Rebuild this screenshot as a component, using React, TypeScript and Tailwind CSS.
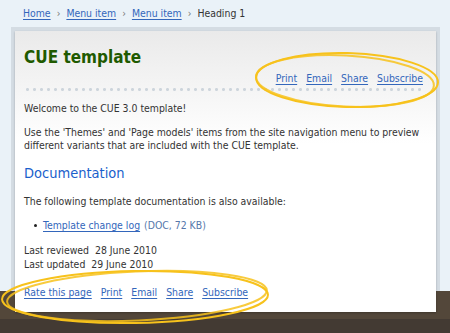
import React from 'react';

const font = "font-['DejaVu_Sans_Condensed','DejaVu_Sans',sans-serif]";

function Ellipses() {
  return (
    <svg
      className="absolute inset-0 pointer-events-none z-20"
      width="450"
      height="333"
      viewBox="0 0 450 333"
      fill="none"
    >
      <g stroke="#f7c21c" strokeWidth="2" strokeLinecap="round">
        <ellipse cx="347" cy="80" rx="91" ry="27" transform="rotate(1.5 347 80)" />
        <ellipse cx="345" cy="81" rx="89" ry="25.5" transform="rotate(3 345 81)" opacity="0.85" />
        <ellipse cx="135" cy="297" rx="133" ry="26" transform="rotate(-1 135 297)" />
        <ellipse cx="137" cy="296" rx="130" ry="24.5" transform="rotate(-2.5 137 296)" opacity="0.85" />
      </g>
    </svg>
  );
}

function Sep() {
  return <span className="mx-[6px] text-[#777]">›</span>;
}

export default function App() {
  const linkCls = 'text-[#3366bb] underline underline-offset-2';
  const actions = ['Print', 'Email', 'Share', 'Subscribe'];

  return (
    <div className={`relative w-[450px] h-[333px] overflow-hidden bg-[#eaf2f8] text-[#333] ${font}`}>
      {/* breadcrumb */}
      <nav className="h-[27px] flex items-center pl-[23px] text-[10.4px] leading-[13px]">
        <a className={linkCls}>Home</a>
        <Sep />
        <a className={linkCls}>Menu item</a>
        <Sep />
        <a className={linkCls}>Menu item</a>
        <Sep />
        <span>Heading 1</span>
      </nav>

      {/* frame */}
      <div className="ml-[11px] mr-[10px] bg-[#d4dce3] px-[4px] pt-[4px]">
        <div className="relative z-10 -mb-[21px] bg-linear-to-b from-[#eaeaea] via-white via-40% to-white pl-[9px] pr-[13px] pt-[15px] pb-[13px] text-[10.4px] leading-[13px] shadow-[0_1px_2px_rgba(0,0,0,0.25)]">
          <h1 className="text-[17px] leading-[23px] font-bold text-[#1f5a00]">CUE template</h1>

          <div className="mt-[3px] flex justify-end gap-[9px]">
            {actions.map((a) => (
              <a key={a} className={linkCls}>{a}</a>
            ))}
          </div>

          <div className="mt-[3px] h-[3px] bg-[radial-gradient(circle,#cdd5dc_1.3px,transparent_1.6px)] bg-[length:7px_3px] bg-repeat-x" />

          <p className="mt-[11px]">Welcome to the CUE 3.0 template!</p>
          <p className="mt-[11px]">
            Use the 'Themes' and 'Page models' items from the site navigation menu to preview
            different variants that are included with the CUE template.
          </p>

          <h2 className="mt-[13px] text-[14.5px] leading-[17px] text-[#1a5fcc]">Documentation</h2>

          <p className="mt-[13px]">The following template documentation is also available:</p>

          <ul className="mt-[11px] pl-[10px]">
            <li className="flex items-center">
              <span className="w-[3px] h-[3px] rounded-full bg-[#222] mr-[6px]" />
              <a className={linkCls}>Template change log</a>
              <span className="ml-[4px] text-[#5577aa]">(DOC, 72 KB)</span>
            </li>
          </ul>

          <div className="mt-[11px] leading-[14px]">
            <p>Last reviewed&nbsp; 28 June 2010</p>
            <p>Last updated&nbsp; 29 June 2010</p>
          </div>

          <div className="mt-[15px] flex gap-[9px]">
            {['Rate this page', ...actions].map((a) => (
              <a key={a} className={linkCls}>{a}</a>
            ))}
          </div>
        </div>
      </div>

      {/* footer band */}
      <div className="h-[28px] bg-[#53473a]" />
      <div className="h-[20px] bg-[#433a33]" />

      <Ellipses />
    </div>
  );
}
